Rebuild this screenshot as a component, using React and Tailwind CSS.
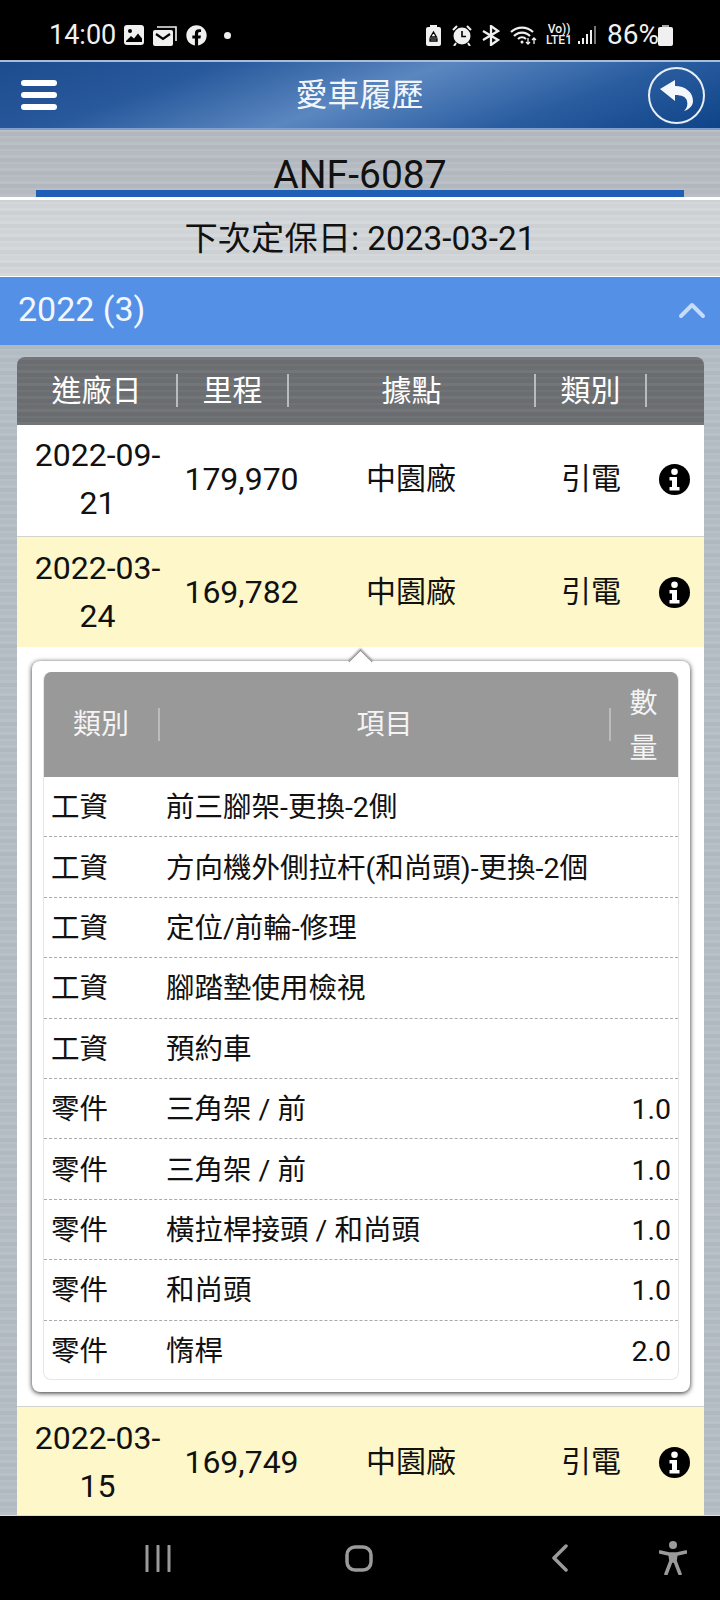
import React from "react";
import { FaFacebook } from "react-icons/fa";

const FONT = "font-['Roboto','Noto_Sans_CJK_TC',sans-serif]";
const METAL =
  "bg-[repeating-linear-gradient(0deg,rgba(255,255,255,0.045)_0px,rgba(255,255,255,0.045)_3px,rgba(0,0,0,0.015)_3px,rgba(0,0,0,0.015)_7px,rgba(255,255,255,0.02)_7px,rgba(255,255,255,0.02)_9px,rgba(0,0,0,0.03)_9px,rgba(0,0,0,0.03)_13px)]";

function InfoIcon() {
  return (
    <svg width="31" height="31" viewBox="0 0 31 31">
      <circle cx="15.500" cy="15.500" r="15.500" fill="#000" />
      <circle cx="15.500" cy="7.800" r="3.300" fill="#fff" />
      <path d="M10.500 13h7.500v10h2.500v3.500H10.500V23H13v-6.500h-2.500z" fill="#fff" />
    </svg>
  );
}

function StatusBar() {
  return (
    <div className="h-[60px] bg-black text-[#f0f0f0] flex items-center pt-[10px] shrink-0">
      <span className="ml-[49px] text-[27px] leading-none w-[64px]">14:00</span>
      <svg className="ml-[11px]" width="20" height="20" viewBox="0 0 20 20">
        <rect x="0" y="0" width="20" height="20" rx="3" fill="#f0f0f0" />
        <circle cx="6" cy="6" r="2" fill="#000" />
        <path d="M2 16l5-5 3 2.500 4-5 4 5V17H2z" fill="#000" />
      </svg>
      <svg className="ml-[9px]" width="24" height="21" viewBox="0 0 24 21">
        <path d="M4 2h19v14" fill="none" stroke="#f0f0f0" strokeWidth="1.600" />
        <rect x="0" y="5" width="20" height="16" rx="2" fill="#f0f0f0" />
        <path d="M3 9l7 5 7-5" fill="none" stroke="#000" strokeWidth="2.200" />
      </svg>
      <FaFacebook className="ml-[9px] text-[21px]" />
      <span className="ml-[17px] w-[7px] h-[7px] rounded-full bg-[#f0f0f0]" />

      <svg className="ml-[195px]" width="15" height="21" viewBox="0 0 15 21">
        <rect x="4" y="0" width="7" height="3" fill="#f0f0f0" />
        <rect x="0" y="2" width="15" height="19" rx="2" fill="#f0f0f0" />
        <path d="M7.500 7l3 5h-6zM4 14h7v2H4z" fill="none" stroke="#000" strokeWidth="1.300" />
      </svg>
      <svg className="ml-[11px]" width="20" height="21" viewBox="0 0 20 21">
        <circle cx="10" cy="11" r="8.500" fill="#f0f0f0" />
        <path d="M10 6v5.500h4" fill="none" stroke="#000" strokeWidth="1.600" />
        <path d="M1 5l4-4M19 5l-4-4M4 18l-2 3M16 18l2 3" stroke="#f0f0f0" strokeWidth="2" />
      </svg>
      <svg className="ml-[10px]" width="18" height="21" viewBox="0 0 18 21">
        <path d="M1 6l15 9-7 5V1l7 5-15 9" fill="none" stroke="#f0f0f0" strokeWidth="2.300" />
      </svg>
      <svg className="ml-[10px]" width="27" height="20" viewBox="0 0 27 20">
        <path d="M1 7a16 16 0 0 1 22 0M4 11a11 11 0 0 1 16 0M8 14a6 6 0 0 1 8 0" fill="none" stroke="#f0f0f0" strokeWidth="2.200" />
        <circle cx="12" cy="17" r="1.500" fill="#f0f0f0" />
        <path d="M18 13v6M16 17l2 2 2-2M24 19v-6M22 15l2-2 2 2" fill="none" stroke="#f0f0f0" strokeWidth="1.300" />
      </svg>
      <span className="ml-[9px] w-[26px] text-center text-[12px] leading-[11px] font-medium whitespace-nowrap">
        Vo))
        <br />
        LTE1
      </span>
      <svg className="ml-[6px]" width="18" height="20" viewBox="0 0 18 20">
        <rect x="0" y="16" width="2" height="3" fill="#f0f0f0" />
        <rect x="4" y="13" width="2" height="6" fill="#f0f0f0" />
        <rect x="8" y="9" width="2" height="10" fill="#f0f0f0" />
        <rect x="12" y="5" width="2" height="14" fill="#f0f0f0" />
        <rect x="16" y="1" width="2" height="18" fill="#777" />
      </svg>
      <span className="ml-[11px] text-[28px] leading-none w-[48px] whitespace-nowrap">86%</span>
      <svg className="ml-[3px]" width="15" height="21" viewBox="0 0 15 21">
        <rect x="4" y="0" width="7" height="3" fill="#aaa" />
        <rect x="0" y="2" width="15" height="19" rx="2" fill="#f0f0f0" />
      </svg>
    </div>
  );
}

function TopBar() {
  return (
    <div className="h-[70px] shrink-0 border-t-2 border-t-[#a9bcd8] border-b-2 border-b-[#7fa0cc] bg-[linear-gradient(160deg,#1d4c8e_0%,#28599c_25%,#5b87c0_50%,#2a5da0_75%,#0f4488_100%)] flex items-center text-white">
      <div className="ml-[21px] w-[36px] flex flex-col gap-[6px]">
        <span className="h-[6px] rounded-full bg-white" />
        <span className="h-[6px] rounded-full bg-white" />
        <span className="h-[6px] rounded-full bg-white" />
      </div>
      <div className="flex-1 text-center text-[32px] leading-none text-[#f2f6fb] ml-[14px]">愛車履歷</div>
      <div className="mr-[15px] w-[57px] h-[57px] rounded-full border-2 border-[#e8eef6] flex items-center justify-center">
        <svg width="33" height="31" viewBox="0 0 33 31">
          <path d="M0 9L15 0v6c10 0 18 6 18 15 0 4-3 8-9 10 3-3 4-6 3-10-1-4-5-6-12-6v6z" fill="#f4f7fb" />
        </svg>
      </div>
    </div>
  );
}

function Cell({ children }) {
  return (
    <div className="flex items-center h-full">
      <span className="flex-1 text-center">{children}</span>
      <span className="w-[2px] h-[33px] bg-[#b9bcbf] shrink-0" />
    </div>
  );
}

function Row({ date1, date2, km, yellow, height, border }) {
  return (
    <div
      className={`grid grid-cols-[161px_127px_232px_108px_1fr] items-center text-[32px] leading-[48px] text-[#111] ${
        height === "tall" ? "h-[112px] pb-[3px]" : "h-[110px]"
      } ${border ? "border-b border-b-[#d4d4cf]" : ""} ${yellow ? "bg-[#fdf7ca]" : "bg-white"}`}
    >
      <div className="text-center">
        {date1}
        <br />
        {date2}
      </div>
      <div className="text-center">{km}</div>
      <div className="text-center pr-[20px] text-[30px]">中園廠</div>
      <div className="text-center text-[30px]">引電</div>
      <div className="flex justify-center">
        <InfoIcon />
      </div>
    </div>
  );
}

const ITEMS = [
  ["工資", "前三腳架-更換-2側", ""],
  ["工資", "方向機外側拉杆(和尚頭)-更換-2個", ""],
  ["工資", "定位/前輪-修理", ""],
  ["工資", "腳踏墊使用檢視", ""],
  ["工資", "預約車", ""],
  ["零件", "三角架 / 前", "1.0"],
  ["零件", "三角架 / 前", "1.0"],
  ["零件", "橫拉桿接頭 / 和尚頭", "1.0"],
  ["零件", "和尚頭", "1.0"],
  ["零件", "惰桿", "2.0"],
];

function Detail() {
  return (
    <div className="bg-white h-[760px] border-b border-b-[#d4d4cf] pt-[14px] px-[15px]">
      <div className="relative bg-white rounded-[8px] h-[731px] w-[658px] shadow-[0_1px_5px_rgba(0,0,0,0.85)] p-[11px]">
        <div className="absolute left-[320px] top-[-8px] w-[17px] h-[17px] rotate-45 bg-white border-l border-t border-[#888] shadow-[-1px_-1px_2px_rgba(0,0,0,0.35)]" />
        <div className="absolute left-[318px] top-0 w-[21px] h-[10px] bg-white" />
        <div className="relative rounded-[8px] border-x border-b border-[#e6e6e6] h-[708px] overflow-hidden">
          <div className="h-[105px] bg-[#999999] grid grid-cols-[116px_451px_1fr] items-center text-[#f4f4f4] text-[28px]">
            <Cell>類別</Cell>
            <Cell>項目</Cell>
            <div className="text-center leading-[45px] pr-[2px] pt-[3px]">
              數
              <br />量
            </div>
          </div>
          {ITEMS.map(([a, b, c], i) => (
            <div
              key={i}
              className={`h-[60.400px] pt-[4px] flex items-center text-[28.500px] text-[#111] ${
                i < ITEMS.length - 1 ? "border-b border-dashed border-b-[#aaa]" : ""
              }`}
            >
              <span className="pl-[7px] w-[122px] shrink-0">{a}</span>
              <span className="flex-1 whitespace-nowrap">{b}</span>
              <span className="pr-[7px]">{c}</span>
            </div>
          ))}
        </div>
      </div>
    </div>
  );
}

function NavBar() {
  return (
    <div className="flex-1 bg-black border-t border-t-[#ddd] flex items-center text-[#9a9a9a]">
      <svg className="ml-[145px]" width="26" height="27" viewBox="0 0 26 27">
        <path d="M2 1v25M13 1v25M24 1v25" stroke="currentColor" strokeWidth="3" strokeLinecap="round" />
      </svg>
      <svg className="ml-[174px]" width="28" height="27" viewBox="0 0 28 27">
        <rect x="2" y="2" width="24" height="23" rx="8" fill="none" stroke="currentColor" strokeWidth="3.500" />
      </svg>
      <svg className="ml-[178px]" width="17" height="28" viewBox="0 0 17 28">
        <path d="M15 2L3 14l12 12" fill="none" stroke="currentColor" strokeWidth="3.500" strokeLinecap="round" strokeLinejoin="round" />
      </svg>
      <svg className="ml-[91px]" width="28" height="34" viewBox="0 0 28 34">
        <circle cx="14" cy="4" r="4" fill="currentColor" />
        <path d="M1 11l9 2h8l9-2M11 13l1 7-5 13M17 13l-1 7 5 13M12 20h4" fill="none" stroke="currentColor" strokeWidth="3.500" strokeLinecap="round" strokeLinejoin="round" />
        <path d="M11 13h6v8h-6z" fill="currentColor" />
      </svg>
    </div>
  );
}

export default function App() {
  return (
    <div className={`w-[720px] h-[1600px] overflow-hidden flex flex-col bg-[#b6bec6] ${FONT}`}>
      <StatusBar />
      <TopBar />
      <div className={`h-[67px] shrink-0 flex flex-col justify-end bg-[#b7bdc3] ${METAL}`}>
        <div className="text-center text-[39px] leading-[50px] text-[#111] h-[40px]">ANF-6087</div>
        <div className="mx-[36px] h-[7px] bg-[#1f5fb5]" />
      </div>
      <div className={`h-[80px] shrink-0 border-t-[3px] border-b-[1px] border-white pt-[2px] bg-[#d3d7da] ${METAL} flex items-center justify-center text-[33.300px] text-[#111]`}>
        下次定保日: 2023-03-21
      </div>
      <div className="h-[68px] shrink-0 bg-[#5390e6] flex items-center justify-between pl-[18px] pr-[14px] pb-[3px] text-[#f2f6fd] text-[34px]">
        <span>2022 (3)</span>
        <svg width="28" height="18" viewBox="0 0 28 18">
          <path d="M3 15L14 4l11 11" fill="none" stroke="#c5dbf7" strokeWidth="4" strokeLinecap="round" strokeLinejoin="round" />
        </svg>
      </div>
      <div className={`h-[1170px] shrink-0 overflow-hidden pt-[12px] pl-[17px] pr-[16px] bg-[#b6bec6] ${METAL}`}>
        <div className="rounded-t-[8px] overflow-hidden">
          <div className={`h-[68px] pb-[1px] bg-[#6d7073] ${METAL} grid grid-cols-[161px_111px_247px_111px_1fr] items-center text-white text-[30px]`}>
            <Cell>進廠日</Cell>
            <Cell>里程</Cell>
            <Cell>據點</Cell>
            <Cell>類別</Cell>
          </div>
          <Row date1="2022-09-" date2="21" km="179,970" height="tall" border />
          <Row date1="2022-03-" date2="24" km="169,782" yellow />
          <Detail />
          <Row date1="2022-03-" date2="15" km="169,749" yellow />
        </div>
      </div>
      <NavBar />
    </div>
  );
}
